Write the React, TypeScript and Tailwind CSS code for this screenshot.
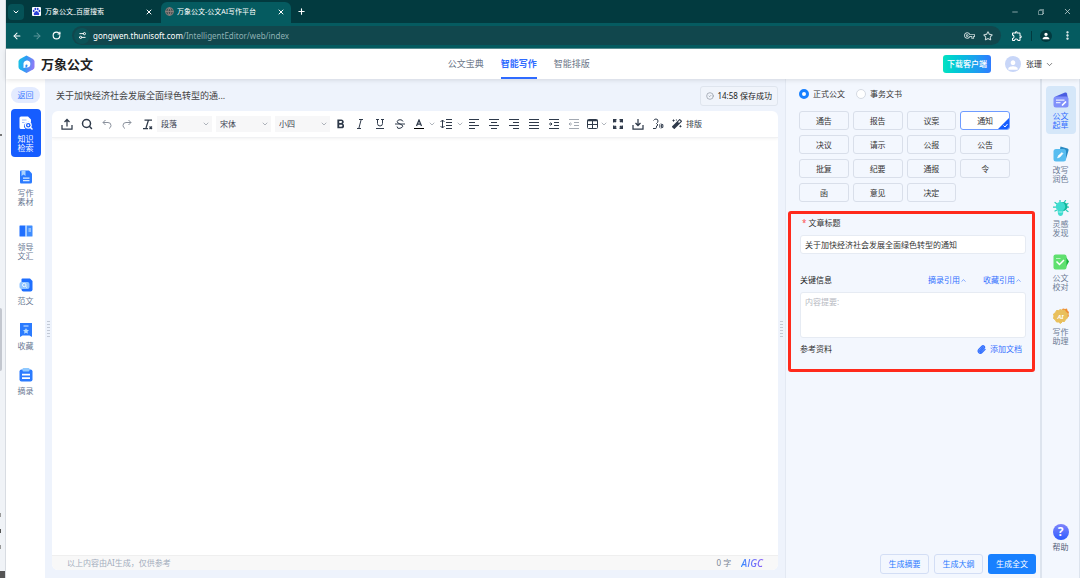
import { useState } from 'react';
import type { ReactNode } from 'react';

import clsx from 'clsx';
import {
	ArrowLeft,
	ArrowRight,
	CircleCheck,
	ChevronDown,
	ChevronUp,
	EllipsisVertical,
	Globe,
	Minus,
	Paperclip,
	Plus,
	RotateCw,
	Search,
	Settings2,
	Star,
	X,
} from 'lucide-react';
import { FaMagic } from 'react-icons/fa';
import { MdFormatBold, MdOutlineExtension, MdOutlineVpnKey, MdPerson } from 'react-icons/md';
import { VscChromeRestore } from 'react-icons/vsc';

const BrowserTabs = () => (
	<div className="flex h-[23px] items-center bg-[#023a3f] pl-0.5 text-[7px] leading-[10px] text-white">
		<button aria-label="搜索标签页" className="flex h-4 w-4 items-center justify-center rounded bg-[#055257]">
			<ChevronDown size={8} strokeWidth={3} />
		</button>
		<div className="flex w-[137px] items-center pl-2">
			<svg viewBox="0 0 16 16" className="h-[9px] w-[9px] rounded-[1px] bg-white" fill="#2b3fd8">
				<ellipse cx="3" cy="7" rx="1.6" ry="2.1" />
				<ellipse cx="6" cy="3.6" rx="1.6" ry="2.2" />
				<ellipse cx="10.2" cy="3.6" rx="1.6" ry="2.2" />
				<ellipse cx="13.2" cy="7" rx="1.6" ry="2.1" />
				<path d="M8 7c-2 0-2.6 2-4 3.3-1.700 1.700-1 4.400 1.300 4.400 1 0 1.700-.4 2.700-.4s1.700.4 2.700.4c2.300 0 3-2.700 1.300-4.400C10.600 9 10 7 8 7z" />
			</svg>
			<span className="ml-1 flex-1 whitespace-nowrap">万象公文_百度搜索</span>
			<button aria-label="关闭标签页" className="mr-2">
				<X size={8} strokeWidth={3} />
			</button>
		</div>
		<div className="flex h-full w-[130px] items-end">
			<div className="flex h-[21px] w-full items-center rounded-t-md bg-[#055b60] pb-0.5 pl-1">
				<Globe size={9} className="text-[#8a7f7c]" fill="#3b4a4c" strokeWidth={3} />
				<span className="ml-[3px] flex-1 whitespace-nowrap">万象公文-公文AI写作平台</span>
				<button aria-label="关闭标签页" className="mr-1.5">
					<X size={8} strokeWidth={3} />
				</button>
			</div>
		</div>
		<button aria-label="新建标签页" className="ml-1.5">
			<Plus size={9} strokeWidth={3} />
		</button>
		<div className="ml-auto flex items-center gap-[18px] pr-2 text-[#c9d8d9]">
			<button aria-label="最小化">
				<Minus size={8} />
			</button>
			<button aria-label="还原">
				<VscChromeRestore size={8} />
			</button>
			<button aria-label="关闭">
				<X size={9} />
			</button>
		</div>
	</div>
);

const AddressBar = () => (
	<div className="flex h-[26px] items-center border-b border-[#5f9396] bg-[#055b60] pl-1.5 text-white">
		<button aria-label="后退" className="w-5">
			<ArrowLeft size={10} strokeWidth={2.5} />
		</button>
		<button aria-label="前进" className="w-5 text-[#5b9599]">
			<ArrowRight size={10} strokeWidth={2.5} />
		</button>
		<button aria-label="刷新" className="w-5">
			<RotateCw size={9} strokeWidth={3} />
		</button>
		<div className="flex h-[19px] flex-1 items-center rounded-full bg-[#11474d] pr-2 pl-0.5">
			<span className="flex h-4 w-4 items-center justify-center rounded-full bg-[#0b5358]">
				<Settings2 size={9} strokeWidth={2.5} className="-scale-x-100" />
			</span>
			<span className="ml-[3px] flex-1 text-[8px] leading-[12px] text-[#8fb0b3]">
				<span className="text-white">gongwen.thunisoft.com</span>/IntelligentEditor/web/index
			</span>
			<button aria-label="密码" className="text-[#c3d3d4]">
				<MdOutlineVpnKey size={11} />
			</button>
			<button aria-label="收藏此页" className="ml-2 text-[#c3d3d4]">
				<Star size={10} strokeWidth={2.5} />
			</button>
		</div>
		<button aria-label="扩展程序" className="ml-2.5">
			<MdOutlineExtension size={12} />
		</button>
		<span className="ml-2 h-2.5 w-px bg-[#023a3f]" />
		<button
			aria-label="个人资料"
			className="ml-2 flex h-3 w-3 items-center justify-center rounded-full bg-[#023a3f]"
		>
			<MdPerson size={10} />
		</button>
		<button aria-label="更多" className="mr-[7px] ml-2.5">
			<EllipsisVertical size={11} strokeWidth={3} />
		</button>
	</div>
);

const Logo = () => (
	<svg viewBox="0 0 34 36" className="h-[18px] w-[17px]">
		<defs>
			<linearGradient id="logo" x1="0" y1="0" x2="1" y2="0.2">
				<stop offset="0" stopColor="#14c9e0" />
				<stop offset="0.5" stopColor="#2f9bf5" />
				<stop offset="1" stopColor="#8b7cf6" />
			</linearGradient>
		</defs>
		<path d="M17 1l13 7q3 2 3 5v11q0 3-3 5l-13 7-13-7q-3-2-3-5V13q0-3 3-5z" fill="url(#logo)" />
		<path d="M11 26V16a7 7 0 1 1 7 9h-2z" fill="#fff" />
		<path d="M15 25v-4q0-2 2-2t2 2-2 4z" fill="#2f8df5" />
	</svg>
);

const navItems = ['公文宝典', '智能写作', '智能排版'];

const Header = () => (
	<header className="relative flex h-[30px] items-center bg-white pl-3 shadow-[0_1px_5px_rgba(0,0,0,0.12)]">
		<Logo />
		<h1 className="ml-1.5 text-[13px] leading-[18px] font-bold text-[#222]">万象公文</h1>
		<nav className="ml-[33.4%] flex h-full gap-[17px] text-[9px]">
			{navItems.map((item, i) => (
				<a
					key={item}
					href="#"
					className={clsx(
						'flex h-full items-center border-y-2 border-t-transparent',
						i === 1 ? 'border-b-[#2f6bff] font-bold text-[#2f6bff]' : 'border-b-transparent text-[#6b7688]',
					)}
				>
					{item}
				</a>
			))}
		</nav>
		<button className="ml-auto h-[18px] w-12 rounded-[3px] bg-gradient-to-r from-[#06e2c0] to-[#2f7bff] text-[8px] leading-[18px] font-medium text-white">
			下载客户端
		</button>
		<button className="mr-[26px] ml-3.5 flex items-center text-[8px] leading-[12px] text-[#333]">
			<span className="mr-[5px] flex h-4 w-4 items-end justify-center overflow-hidden rounded-full bg-[#c8d6f8] text-white">
				<MdPerson size={14} />
			</span>
			张珊
			<ChevronDown size={9} className="ml-[3px] text-[#555]" />
		</button>
	</header>
);

const SearchDocIcon = () => (
	<svg viewBox="0 0 28 28" className="h-3.5 w-3.5">
		<path d="M4 1h14l6 6v7a8 8 0 0 0-11 12H4q-3 0-3-3V4q0-3 3-3z" fill="#fff" />
		<path d="M6 8h9M6 13h5" stroke="#9dbcff" strokeWidth="2" />
		<circle cx="18.500" cy="18.500" r="7" fill="#fff" />
		<circle cx="18.500" cy="18.500" r="4.500" fill="#165dff" />
		<circle cx="18.500" cy="18.500" r="2" fill="#fff" />
		<path d="M23 23l3 3" stroke="#fff" strokeWidth="3" strokeLinecap="round" />
	</svg>
);

const MaterialIcon = () => (
	<svg viewBox="0 0 28 28" className="h-3.5 w-3.5">
		<path d="M4 1h16l6 6v17q0 3-3 3H4q-2 0-2-3V3q0-2 2-2z" fill="#2b7bff" />
		<path d="M5 1h8v11l-4-3-4 3z" fill="#a9d3ff" />
		<path d="M8 16h13M8 21h13" stroke="#d9ecff" strokeWidth="2.500" />
	</svg>
);

const BookIcon = () => (
	<svg viewBox="0 0 28 28" className="h-3.5 w-3.5">
		<path d="M2 3h11v22H2q-1 0-1-1V4q0-1 1-1z" fill="#1f6fff" />
		<path d="M15 3h11q1 0 1 1v20q0 1-1 1H15z" fill="#3f8dff" />
		<path d="M19 10h5M19 14h5" stroke="#d9ecff" strokeWidth="2" />
		<path d="M14 3v22" stroke="#a9d3ff" strokeWidth="2" />
	</svg>
);

const SampleIcon = () => (
	<svg viewBox="0 0 28 28" className="h-3.5 w-3.5">
		<path d="M7 1h15l5 5v17q0 4-4 4H9q-4 0-4-4V3q0-2 2-2z" fill="#1f6fff" />
		<rect x="1" y="8" width="20" height="14" rx="4" fill="#8fc4ff" />
		<circle cx="10.500" cy="14" r="3.500" fill="none" stroke="#e8f4ff" strokeWidth="2" />
		<path d="M13 17l3 2" stroke="#e8f4ff" strokeWidth="2" />
	</svg>
);

const BookmarkIcon = () => (
	<svg viewBox="0 0 28 28" className="h-3.5 w-3.5">
		<path d="M2 0h24v28l-5-3H7l-5 3z" fill="#2b7bff" />
		<path d="M9 6h10" stroke="#d9ecff" strokeWidth="2" />
		<path d="M14 10l1.800 3.700 4.200.6-3 2.900.7 4.100-3.700-2-3.700 2 .7-4.100-3-2.900 4.200-.6z" fill="#b5dcff" />
	</svg>
);

const ClipboardIcon = () => (
	<svg viewBox="0 0 28 28" className="h-3.5 w-3.5">
		<rect x="1" y="3" width="26" height="24" rx="4" fill="#2b7bff" />
		<rect x="7" y="0" width="14" height="7" rx="2" fill="#8fc9ff" />
		<path d="M6 13h16M6 20h16" stroke="#fff" strokeWidth="3.500" />
	</svg>
);

const DraftIcon = () => (
	<svg viewBox="0 0 32 32" className="h-4 w-4">
		<path d="M5 9L24 1q3-1 4 2l2 11H5z" fill="#4a5de0" />
		<rect x="1" y="9" width="30" height="22" rx="5" fill="#8090fa" />
		<path d="M6 16h17M6 21h9" stroke="#e3e8ff" strokeWidth="2.500" />
		<path d="M19 26l6-6" stroke="#fff" strokeWidth="3.500" strokeLinecap="round" />
	</svg>
);

const RewriteIcon = () => (
	<svg viewBox="0 0 32 32" className="h-4 w-4">
		<path d="M15 1l14 4q3 1 2 4l-5 17-15-5z" fill="#2a8bc4" />
		<rect x="1" y="6" width="25" height="25" rx="5" fill="#58bdf0" />
		<path d="M9 24l2-5 7-6 2 2-6 7z" fill="#fff" stroke="#fff" strokeWidth="1" />
	</svg>
);

const IdeaIcon = () => (
	<svg viewBox="0 0 32 32" className="h-4 w-4">
		<path
			d="M1 14h4M4 5l4 3M14 0v4M25 1l-2 3M30 7l-3 2M28 14h4M27 21l3 2M4 22l4-2"
			stroke="#28cdb8"
			strokeWidth="2.500"
			strokeLinecap="round"
		/>
		<circle cx="20" cy="13" r="9" fill="#12b79c" />
		<path d="M15 4a9 9 0 0 1 6 16l-1 8q-1 4-5 4t-5-4l-1-8a9 9 0 0 1 6-16z" fill="#3fdcd0" />
		<path d="M11 24h8" stroke="#a8f5ee" strokeWidth="2" />
	</svg>
);

const ProofIcon = () => (
	<svg viewBox="0 0 32 32" className="h-4 w-4">
		<path d="M20 6h6l6 9-6 11h-6z" fill="#17b33c" />
		<path d="M5 1h18q4 0 4 4v22q0 4-4 4H5q-4 0-4-4V5q0-4 4-4z" fill="#5fe06f" />
		<path d="M7 15l6 6 9-9" fill="none" stroke="#fff" strokeWidth="3" />
		<path d="M6 9h9" stroke="#b9f5c0" strokeWidth="2" />
	</svg>
);

const AssistantIcon = () => (
	<svg viewBox="0 0 32 32" className="h-4 w-4">
		<path d="M18 2l3-1 3 1 4-1 1 4 3 3-1 4 1 5-8 2z" fill="#ee8f35" />
		<path
			d="M15 3l4 2 4-1 2 4 4 3-1 5 1 4-4 3-2 4-4 0-4 4-4-3-4 0-2-4-4-3 1-5-1-4 4-3 2-4 4 0z"
			fill="#e9c05c"
			stroke="#e9c05c"
			strokeWidth="2"
			strokeLinejoin="round"
		/>
		<text x="15" y="21" textAnchor="middle" fontSize="12" fontWeight="700" fontStyle="italic" fill="#fff">
			AI
		</text>
	</svg>
);

type RailItem = { lines: string[]; icon: ReactNode };

const leftItems: RailItem[] = [
	{ lines: ['知识', '检索'], icon: <SearchDocIcon /> },
	{ lines: ['写作', '素材'], icon: <MaterialIcon /> },
	{ lines: ['领导', '文汇'], icon: <BookIcon /> },
	{ lines: ['范文'], icon: <SampleIcon /> },
	{ lines: ['收藏'], icon: <BookmarkIcon /> },
	{ lines: ['摘录'], icon: <ClipboardIcon /> },
];

const rightItems: RailItem[] = [
	{ lines: ['公文', '起草'], icon: <DraftIcon /> },
	{ lines: ['改写', '润色'], icon: <RewriteIcon /> },
	{ lines: ['灵感', '发现'], icon: <IdeaIcon /> },
	{ lines: ['公文', '校对'], icon: <ProofIcon /> },
	{ lines: ['写作', '助理'], icon: <AssistantIcon /> },
];

const RailButton = ({ item, activeClass }: { item: RailItem; activeClass?: string }) => (
	<button
		className={clsx(
			'flex w-[30px] flex-col items-center rounded pt-1.5 pb-[5px] text-[8px] leading-[9px]',
			activeClass ?? 'text-[#6b7a94]',
		)}
	>
		<span className="mb-[3px] flex h-4 items-center">{item.icon}</span>
		{item.lines.map((line) => (
			<span key={line}>{line}</span>
		))}
	</button>
);

const LeftRail = () => (
	<aside className="flex w-[39px] flex-col items-center gap-1.5 bg-white pt-2">
		<button className="h-4 w-[29px] rounded-full bg-[#e3ebff] text-[8px] leading-[16px] text-[#3f7dff]">返回</button>
		{leftItems.map((item, i) => (
			<RailButton key={item.lines[0]} item={item} activeClass={i === 0 ? 'bg-[#165dff] text-white' : undefined} />
		))}
	</aside>
);

const RightRail = () => (
	<aside className="flex w-10 flex-col items-center gap-1.5 border-r border-l-2 border-[#dde4ee] bg-[#f3f7fe] pt-[7px] pb-[26px]">
		{rightItems.map((item, i) => (
			<RailButton
				key={item.lines.join('')}
				item={item}
				activeClass={i === 0 ? 'bg-[#d5e7f9] text-[#2f6bff]' : undefined}
			/>
		))}
		<button className="mt-auto flex flex-col items-center gap-0.5 text-[8px] leading-[10px] text-[#55617a]">
			<span className="flex h-4 w-4 items-center justify-center rounded-full bg-gradient-to-b from-[#7d83fb] to-[#2b5bff] text-[12px] font-bold text-white">
				?
			</span>
			帮助
		</button>
	</aside>
);

const ResizeHandle = () => (
	<div className="flex w-[7px] flex-col items-center justify-center gap-0.5">
		{[0, 1, 2, 3, 4, 5].map((n) => (
			<span key={n} className="h-px w-[3px] bg-[#c3cad6]" />
		))}
	</div>
);

const Tool = ({ label, width = 'w-5', children }: { label: string; width?: string; children: ReactNode }) => (
	<button aria-label={label} className={clsx('flex h-5 shrink-0 items-center justify-center', width)}>
		{children}
	</button>
);

const Caret = ({ label }: { label: string }) => (
	<button aria-label={label} className="flex w-2 shrink-0 justify-center text-[#8a919c]">
		<ChevronDown size={8} />
	</button>
);

const FormatSelect = ({ label, value }: { label: string; value: string }) => (
	<div className="relative w-[55px] shrink-0 text-[8px] leading-[16px]">
		<select aria-label={label} className="h-4 w-full appearance-none bg-[#f7f7f8] pl-1 text-[#3a4250]">
			<option>{value}</option>
		</select>
		<ChevronDown size={8} className="pointer-events-none absolute top-1 right-0.5 text-[#8a919c]" />
	</div>
);

// 10x10 grid, one unit per pixel
const Glyph = ({ d, className }: { d: string; className?: string }) => (
	<svg viewBox="0 0 10 10" className={clsx('h-2.5 w-2.5', className)} fill="none" stroke="currentColor">
		<path d={d} />
	</svg>
);

const UndoIcon = ({ className }: { className?: string }) => (
	<svg
		viewBox="0 0 20 20"
		className={clsx('h-2.5 w-2.5 text-[#8a919c]', className)}
		fill="none"
		stroke="currentColor"
		strokeWidth="2"
	>
		<path d="M7 2L2 7l5 5M2 7h10q6 0 6 6 0 4-4 6" />
	</svg>
);

const Toolbar = () => (
	<div className="flex h-[27px] items-center overflow-hidden border-b border-[#f0f1f3] pl-[5px] text-[#2f3a4a] shadow-[0_1px_3px_rgba(0,0,0,0.05)]">
		<Tool label="导入">
			<svg viewBox="0 0 24 24" className="h-3 w-3" fill="none" stroke="currentColor" strokeWidth="2.500">
				<path d="M12 17V3M7 8l5-5 5 5M2 14v8h20v-8" />
			</svg>
		</Tool>
		<Tool label="查找">
			<Search size={12} strokeWidth={3} />
		</Tool>
		<Tool label="撤销">
			<UndoIcon />
		</Tool>
		<Tool label="重做">
			<UndoIcon className="-scale-x-100" />
		</Tool>
		<Tool label="清除格式">
			<svg viewBox="0 0 22 22" className="h-[11px] w-[11px]" fill="none" stroke="currentColor" strokeWidth="2.500">
				<path d="M5 2h15M13 2L8 18M2 19h10M15 15l5 5M20 15l-5 5" />
			</svg>
		</Tool>
		<div className="flex gap-1">
			<FormatSelect label="段落格式" value="段落" />
			<FormatSelect label="字体" value="宋体" />
			<FormatSelect label="字号" value="小四" />
		</div>
		<Tool label="加粗">
			<MdFormatBold size={15} />
		</Tool>
		<Tool label="斜体">
			<Glyph d="M4 .5h4M2 9.500h4M6.200 .5L3.800 9.500" />
		</Tool>
		<Tool label="下划线">
			<Glyph d="M1 .5h3M6 .5h3M2.500 .5v4q0 2.500 2.500 2.500t2.500-2.500v-4M1 9.500h8" />
		</Tool>
		<Tool label="删除线">
			<Glyph d="M8 2.500Q7.500 .7 5 .7T2.200 2.700q0 1.300 2.800 2.300t2.800 2.200T5 9.300 2 7.500M0 5h10" />
		</Tool>
		<Tool label="文字颜色" width="w-[18px]">
			<svg viewBox="0 0 20 20" className="h-2.5 w-2.5">
				<path d="M5 14l5-12 5 12M7 10h6" fill="none" stroke="currentColor" strokeWidth="2.500" />
				<path d="M0 19h20" stroke="#000" strokeWidth="2" />
			</svg>
		</Tool>
		<Caret label="更多颜色" />
		<Tool label="行高">
			<svg viewBox="0 0 12 10" className="h-2.5 w-3" fill="none" stroke="currentColor">
				<path d="M2.500 1v8M.5 3l2-2 2 2M.5 7l2 2 2-2M6 .5h6M6 3.500h6M6 6.500h6M6 9.500h6" />
			</svg>
		</Tool>
		<Caret label="选择行高" />
		<Tool label="左对齐">
			<Glyph d="M0 .5h10M0 3.500h6M0 6.500h10M0 9.500h6" />
		</Tool>
		<Tool label="居中">
			<Glyph d="M0 .5h10M2 3.500h6M0 6.500h10M2 9.500h6" />
		</Tool>
		<Tool label="右对齐">
			<Glyph d="M0 .5h10M4 3.500h6M0 6.500h10M4 9.500h6" />
		</Tool>
		<Tool label="两端对齐">
			<Glyph d="M0 .5h10M0 3.500h10M0 6.500h10M0 9.500h10" />
		</Tool>
		<Tool label="增加缩进">
			<Glyph d="M0 .5h10M5 3.500h5M5 6.500h5M0 9.500h10M0 5h3M1.500 3.500L3 5 1.500 6.500" />
		</Tool>
		<Tool label="减少缩进">
			<Glyph className="text-[#a3a9b2]" d="M0 .5h10M5 3.500h5M5 6.500h5M0 9.500h10M0 5h3M1.500 3.500L0 5l1.500 1.500" />
		</Tool>
		<Tool label="表格" width="w-4">
			<svg viewBox="0 0 22 20" className="h-2.5 w-[11px]" fill="none" stroke="currentColor" strokeWidth="2">
				<rect x="1" y="1" width="20" height="18" rx="2" />
				<path d="M1 3h20" strokeWidth="3" />
				<path d="M1 11h20M11 4v15" />
			</svg>
		</Tool>
		<Caret label="表格选项" />
		<Tool label="全屏">
			<svg viewBox="0 0 20 20" className="h-2.5 w-2.5" fill="none" stroke="currentColor" strokeWidth="3">
				<path d="M1.500 7V1.500H7M13 1.500h5.500V7M18.500 13v5.500H13M7 18.500H1.500V13M2 2l4 4M18 2l-4 4M18 18l-4-4M2 18l4-4" />
			</svg>
		</Tool>
		<Tool label="下载">
			<svg viewBox="0 0 24 24" className="h-3 w-3" fill="none" stroke="currentColor" strokeWidth="2.500">
				<path d="M12 2v13M7 10l5 5 5-5M2 14v8h20v-8" />
			</svg>
		</Tool>
		<Tool label="朗读">
			<svg viewBox="0 0 24 24" className="h-3 w-3" fill="none" stroke="currentColor" strokeWidth="2">
				<path d="M3 5q2-3 5-3 4 0 4 4 0 3-3 5l3 3-3 2v3q0 2-3 2H2M15 13q2 3 0 6M18 11q3 5 0 10M21 12q2 4 0 8" />
			</svg>
		</Tool>
		<button className="flex shrink-0 items-center gap-1 text-[8px] leading-[12px]">
			<FaMagic size={10} className="ml-1" />
			排版
		</button>
	</div>
);

const Editor = () => (
	<main className="flex min-w-0 flex-1 flex-col pb-2">
		<div className="flex h-8 items-center justify-between pt-px pl-1">
			<h2 className="text-[9px] leading-[14px] text-[#444]">关于加快经济社会发展全面绿色转型的通...</h2>
			<div className="flex h-5 items-center gap-[3px] rounded-[3px] border border-[#dfe5ee] bg-[#f0f4fb] px-[5px] text-[8px] text-[#222]">
				<CircleCheck size={8} className="text-[#8a919c]" />
				14:58 保存成功
			</div>
		</div>
		<div className="flex flex-1 flex-col overflow-hidden rounded-md bg-white">
			<Toolbar />
			<textarea aria-label="正文" className="w-full flex-1 resize-none p-4 text-[9px] outline-none" />
			<div className="flex h-[15px] items-center border-t border-[#efefef] bg-[#f8f8f8] pr-3.5 pl-[15px] text-[8px] leading-[12px] text-[#a3adbd]">
				以上内容由AI生成，仅供参考
				<span className="mr-2.5 ml-auto text-[#7b8595]">0 字</span>
				<span className="bg-gradient-to-r from-[#2f8bff] to-[#8a5cf6] bg-clip-text pr-px font-['Open_Sans',sans-serif] text-[10px] font-semibold text-transparent italic">
					AIGC
				</span>
			</div>
		</div>
	</main>
);

const docTypes = [
	'通告',
	'报告',
	'议案',
	'通知',
	'决议',
	'请示',
	'公报',
	'公告',
	'批复',
	'纪要',
	'通报',
	'令',
	'函',
	'意见',
	'决定',
];

const radioClass =
	'h-2.5 w-2.5 appearance-none rounded-full border border-[#d5dae3] bg-white checked:border-[3px] checked:border-[#1880ff]';

const DraftPanel = () => {
	const [kind, setKind] = useState('正式公文');
	const [docType, setDocType] = useState('通知');
	const [title, setTitle] = useState('关于加快经济社会发展全面绿色转型的通知');

	return (
		<section className="flex w-[255px] shrink-0 flex-col border-l border-[#e3e9f3] bg-[#f3f7fe] pb-1 text-[8px] leading-[12px] text-[#333]">
			<div className="flex gap-[11px] pt-[9px] pl-[13px]">
				{['正式公文', '事务文书'].map((name) => (
					<label key={name} className="flex items-center gap-1">
						<input
							type="radio"
							name="kind"
							checked={kind === name}
							onChange={() => setKind(name)}
							className={radioClass}
						/>
						{name}
					</label>
				))}
			</div>
			<div className="mt-[11px] mr-[30px] ml-[13px] grid grid-cols-4 gap-x-1 gap-y-[5px]">
				{docTypes.map((name) => (
					<button
						key={name}
						onClick={() => setDocType(name)}
						className={clsx(
							'relative h-[19px] overflow-hidden rounded-[3px] border',
							docType === name ? 'border-[#6f9cff] bg-white' : 'border-[#d9dfea]',
						)}
					>
						{name}
						{docType === name && (
							<svg viewBox="0 0 22 22" className="absolute right-0 bottom-0 h-[11px] w-[11px]">
								<path d="M22 0v22H0z" fill="#165dff" />
								<path d="M11 15l3 3 5-6" fill="none" stroke="#fff" strokeWidth="2" />
							</svg>
						)}
					</button>
				))}
			</div>
			<div className="mt-[9px] mr-[5px] ml-0.5 rounded-[3px] border-[3px] border-[#ff2a1c] pt-[3px] pr-1.5 pb-2 pl-[9px]">
				<label htmlFor="title" className="flex gap-0.5 pl-0.5">
					<span className="text-[#ff4d4f]">*</span>
					文章标题
				</label>
				<input
					id="title"
					value={title}
					onChange={(e) => setTitle(e.target.value)}
					className="mt-1.5 h-[19px] w-full rounded-[3px] border border-[#e6ebf3] bg-white px-1 outline-none"
				/>
				<div className="mt-5 flex items-center pr-1 text-[#3370ff]">
					<label htmlFor="keyInfo" className="mr-auto text-[#222]">
						关键信息
					</label>
					<button className="flex items-center">
						摘录引用
						<ChevronUp size={7} />
					</button>
					<button className="ml-4 flex items-center">
						收藏引用
						<ChevronUp size={7} />
					</button>
				</div>
				<textarea
					id="keyInfo"
					placeholder="内容提要:"
					className="mt-1.5 block h-[46px] w-full resize-none rounded-[3px] border border-[#e6ebf3] bg-white px-1 py-[3px] outline-none placeholder:text-[#b5b8bf]"
				/>
				<div className="mt-[5px] mb-1.5 flex items-center justify-between pr-1">
					<span>参考资料</span>
					<button className="flex items-center gap-1 text-[#3370ff]">
						<Paperclip size={9} strokeWidth={3.5} />
						添加文档
					</button>
				</div>
			</div>
			<div className="mt-auto mr-1 flex justify-end gap-[5px]">
				{['生成摘要', '生成大纲'].map((name) => (
					<button key={name} className="h-5 w-[49px] rounded-[3px] border border-[#d3def5] text-[#2b7bff]">
						{name}
					</button>
				))}
				<button className="h-5 w-12 rounded-[3px] bg-[#1880ff] text-white">生成全文</button>
			</div>
		</section>
	);
};

// sliver of the window lying behind the browser
const BackWindow = () => (
	<div className="flex w-1.5 shrink-0 flex-col border-r border-[#d8dce2] bg-[#f0f3f7]">
		<span className="mt-[134px] h-0.5 w-0.5 bg-[#777]" />
		<span className="mt-[172px] h-[63px] w-0.5 rounded-r bg-[#c3c7cf]" />
		<span className="mt-auto mb-3 h-1 w-px bg-[#999]" />
		<span className="mb-3 h-1 w-px bg-[#555]" />
		<span className="mb-[22px] h-1 w-px bg-[#999]" />
		<span className="h-[7px] bg-[#555]" />
	</div>
);

export default function App() {
	return (
		<div className="flex min-h-screen bg-white font-['Noto_Sans','Noto_Sans_CJK_SC',sans-serif]">
			<BackWindow />
			<div className="flex min-w-0 flex-1 flex-col">
				<BrowserTabs />
				<AddressBar />
				<Header />
				<div className="flex flex-1 bg-[#eef3fc]">
					<LeftRail />
					<ResizeHandle />
					<Editor />
					<ResizeHandle />
					<DraftPanel />
					<RightRail />
				</div>
			</div>
		</div>
	);
}
